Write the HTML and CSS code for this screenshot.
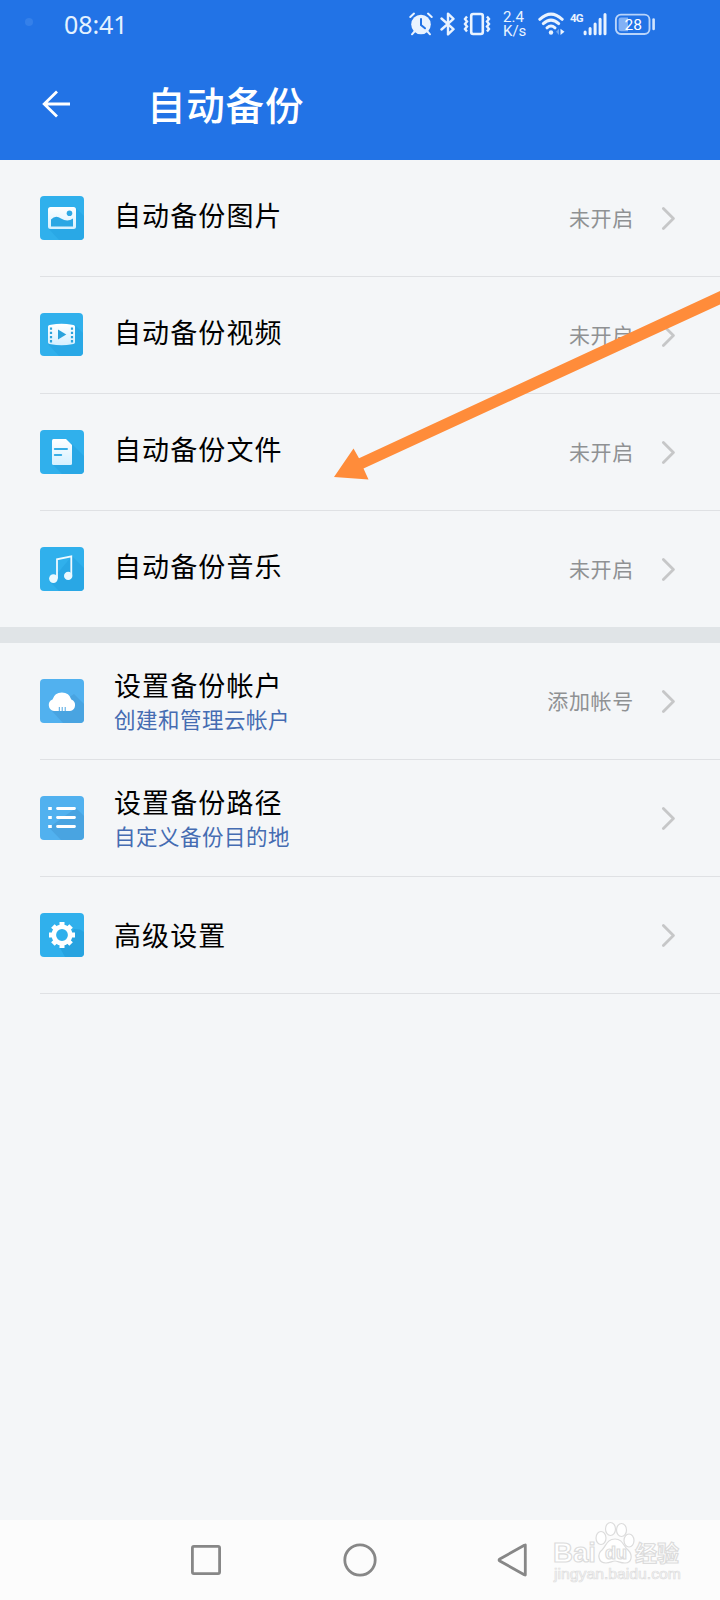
FILE: index.html
```html
<!DOCTYPE html>
<html lang="zh-CN">
<head>
  <meta charset="UTF-8" />
  <meta name="viewport" content="width=device-width, initial-scale=1" />
  <title>自动备份</title>
  <link rel="stylesheet" href="styles.css">
</head>
<body>
  <!-- shared gradient and chevron -->
  <svg class="defs" width="0" height="0">
    <defs>
      <linearGradient id="glyph" x1="0" y1="0" x2="0" y2="1">
        <stop offset="0" stop-color="#ffffff" />
        <stop offset="1" stop-color="#d5f0ff" />
      </linearGradient>
      <symbol id="chevron" viewBox="0 0 14 24">
        <path d="M2.4 2.4 L12.4 12.4 L2.4 22.4" fill="none" stroke="#c6c7c8" stroke-width="2.8" stroke-linecap="round" stroke-linejoin="round" />
      </symbol>
    </defs>
  </svg>

  <header>
    <div class="status-bar">
      <span class="camera-dot"></span>
      <span class="time">08:41</span>
      <div class="status-icons">
        <svg class="alarm" width="24" height="24" viewBox="0 0 24 24">
          <circle cx="12" cy="12.5" r="9.8" fill="#e9f3ff" />
          <path d="M1.3 5 L5 1.6 M22.7 5 L19 1.6 M5.5 19.5 L3 22.3 M18.5 19.5 L21 22.3" stroke="#e9f3ff" stroke-width="2" stroke-linecap="round" />
          <path d="M12 7 V13 L16 16.3" fill="none" stroke="#2273e6" stroke-width="2" stroke-linecap="round" />
        </svg>
        <svg class="bluetooth" width="16" height="24" viewBox="0 0 16 24">
          <path d="M1.5 6.5 L13.5 17.2 L8 22.4 V1.6 L13.5 6.8 L1.5 17.5" fill="none" stroke="#e9f3ff" stroke-width="2.4" stroke-linejoin="round" stroke-linecap="round" />
        </svg>
        <svg class="vibrate" width="28" height="24" viewBox="0 0 28 24">
          <rect x="8.2" y="2" width="11.6" height="20" rx="2" fill="none" stroke="#e9f3ff" stroke-width="2.6" />
          <path d="M4 4.5 L2 7 L4 9.5 L2 12 L4 14.5 L2 17 L4 19.5 M24 4.5 L26 7 L24 9.5 L26 12 L24 14.5 L26 17 L24 19.5" fill="none" stroke="#e9f3ff" stroke-width="2.4" />
        </svg>
        <div class="speed"><span>2.4</span><span>K/s</span></div>
        <svg class="wifi" width="28" height="24" viewBox="0 0 28 24">
          <g fill="none" stroke="#e9f3ff" stroke-width="3" stroke-linecap="round">
            <path d="M1.8 7.3 Q13 -3 24.2 7.3" />
            <path d="M5.3 11.6 Q13 4.6 20.7 11.6" />
            <path d="M9 15.8 Q13 12.3 17 15.8" />
          </g>
          <circle cx="13" cy="20.5" r="2.2" fill="#e9f3ff" />
          <path d="M22.5 16.8 L22.5 23 L26.500 19.8 Z" fill="#e9f3ff" />
          <path d="M21 16.8 L21 23 L18 19.8 Z" fill="#6da5f0" />
        </svg>
        <span class="network">4G</span>
        <svg class="signal" width="24" height="24" viewBox="0 0 24 24">
          <path d="M2.1 20 V21.8 M7.1 16.5 V21.8 M12.1 12 V21.8 M17.1 7.3 V21.8 M22 2.5 V21.8" stroke="#e9f3ff" stroke-width="3" stroke-linecap="round" />
        </svg>
        <svg class="battery" width="42" height="24" viewBox="0 0 42 24">
          <rect x="1.9" y="2.6" width="33.6" height="19.4" rx="5" fill="none" stroke="#b9d4fa" stroke-width="1.9" />
          <path d="M7 5.4 H14 V19.3 H7 Q4.6 19.3 4.6 17 V7.8 Q4.6 5.4 7 5.4 Z" fill="#82b1f5" />
          <path d="M39.6 7.5 V17" stroke="#d3e5fd" stroke-width="2.6" stroke-linecap="round" />
          <text x="19.2" y="17.6" text-anchor="middle">28</text>
        </svg>
      </div>
    </div>
    <div class="title-bar">
      <svg width="30" height="30" viewBox="0 0 30 30">
        <path d="M29 15 H3 M16 2.5 L3.2 15 L16 27.5" fill="none" stroke="#fff" stroke-width="2.8" />
      </svg>
      <h1>自动备份</h1>
    </div>
  </header>

  <main>
    <ul class="group">
      <li class="row">
        <svg class="icon" width="44" height="44" viewBox="0 0 44 44">
          <rect width="44" height="44" rx="4" fill="#30b0ec" />
          <path d="M8 32 L36 12 L44 20 V40 Q44 44 40 44 H19 Z" fill="#29a8e6" />
          <rect x="8" y="11" width="28" height="22" rx="2.5" fill="url(#glyph)" />
          <path d="M11 23.5 Q15.5 18.5 21 22.5 Q27.5 26.5 33 22.5 V30.5 H11 Z" fill="#2ba7e4" />
          <circle cx="29.5" cy="17.3" r="2.8" fill="#30a9e4" />
        </svg>
        <div class="label"><span class="name">自动备份图片</span></div>
        <span class="value">未开启</span>
        <svg class="chevron"><use href="#chevron" /></svg>
      </li>
      <li class="row">
        <svg class="icon" width="44" height="44" viewBox="0 0 44 44">
          <rect width="43" height="43" rx="4" fill="#30b0ec" />
          <path d="M8 31 L35 12 L43 20 V39 Q43 43 39 43 H19 Z" fill="#29a8e6" />
          <path d="M8 13.5 Q8 12 11 11.7 Q21.5 10 32 11.7 Q35 12 35 13.5 V29.5 Q35 31 32 31.3 Q21.5 33 11 31.3 Q8 31 8 29.5 Z" fill="url(#glyph)" />
          <path d="M11 14.5 V30 M32 14.5 V30" stroke="#2ba3dc" stroke-width="2.2" stroke-dasharray="2.3 1.9" />
          <path d="M18 16.5 V26.5 L26.3 21.5 Z" fill="#2ba3dc" />
        </svg>
        <div class="label"><span class="name">自动备份视频</span></div>
        <span class="value">未开启</span>
        <svg class="chevron"><use href="#chevron" /></svg>
      </li>
      <li class="row">
        <svg class="icon" width="44" height="44" viewBox="0 0 44 44">
          <rect width="44" height="44" rx="4" fill="#30b0ec" />
          <path d="M12 34 L31 13 L44 26 V40 Q44 44 40 44 H22 Z" fill="#29a7e5" />
          <path d="M13.5 9 H26 L32 15 V33.5 Q32 35 30.5 35 H13.5 Q12 35 12 33.5 V10.5 Q12 9 13.5 9 Z" fill="url(#glyph)" />
          <path d="M14.8 19.1 H27 M14.8 25 H21.2" stroke="#38aee6" stroke-width="2" stroke-linecap="round" />
        </svg>
        <div class="label"><span class="name">自动备份文件</span></div>
        <span class="value">未开启</span>
        <svg class="chevron"><use href="#chevron" /></svg>
      </li>
      <li class="row">
        <svg class="icon" width="44" height="44" viewBox="0 0 44 44">
          <rect width="44" height="44" rx="4" fill="#30b0ec" />
          <path d="M10 35 L32 9 L44 21 V40 Q44 44 40 44 H19 Z" fill="#29a7e5" />
          <path d="M17 31.5 V12.3 L31.3 9.3 V28.5" fill="none" stroke="#effaff" stroke-width="1.8" />
          <circle cx="13.4" cy="31.6" r="4.3" fill="#ebf9ff" />
          <circle cx="28.2" cy="28.9" r="4.2" fill="#ebf9ff" />
        </svg>
        <div class="label"><span class="name">自动备份音乐</span></div>
        <span class="value">未开启</span>
        <svg class="chevron"><use href="#chevron" /></svg>
      </li>
    </ul>

    <ul class="group">
      <li class="row">
        <svg class="icon" width="44" height="44" viewBox="0 0 44 44">
          <rect width="44" height="44" rx="4" fill="#51b1ef" />
          <path d="M11 31 L34 15 L44 25 V40 Q44 44 40 44 H23 Z" fill="#49a4e1" />
          <path d="M14 32 A6 6 0 0 1 12.5 20.5 A9.8 9.8 0 0 1 31.3 20.5 A6 6 0 0 1 30 32 Z" fill="#fff" />
          <path d="M19.3 28 V32 M22.2 28 V32 M25.2 28 V32" stroke="#4aa6e3" stroke-width="1" />
        </svg>
        <div class="label double"><span class="name">设置备份帐户</span><span class="desc">创建和管理云帐户</span></div>
        <span class="value">添加帐号</span>
        <svg class="chevron"><use href="#chevron" /></svg>
      </li>
      <li class="row">
        <svg class="icon" width="44" height="44" viewBox="0 0 44 44">
          <rect width="44" height="44" rx="4" fill="#51b1ef" />
          <path d="M9 31.5 L36 12 L44 20 V40 Q44 44 40 44 H21 Z" fill="#49a4e1" />
          <path d="M17.5 12.5 H34.5 M17.5 21.5 H34.5 M17.5 30.5 H34.5" stroke="#fff" stroke-width="2.8" stroke-linecap="round" />
          <path d="M8.2 12.5 H11.8 M8.2 21.5 H11.8 M8.2 30.5 H11.8" stroke="#fff" stroke-width="3.2" />
        </svg>
        <div class="label double"><span class="name">设置备份路径</span><span class="desc">自定义备份目的地</span></div>
        <svg class="chevron"><use href="#chevron" /></svg>
      </li>
      <li class="row">
        <svg class="icon" width="44" height="44" viewBox="0 0 44 44">
          <rect width="44" height="44" rx="4" fill="#30b0ec" />
          <path d="M20 35 L34 16 L40 16.5 L44 19 V40 Q44 44 40 44 H25 Z" fill="#27a3e0" />
          <circle cx="22" cy="22" r="8.2" fill="none" stroke="#fff" stroke-width="4.6" />
          <path d="M22 9 V13 M22 31 V35 M9 22 H13 M31 22 H35 M12.9 12.9 L15.5 15.5 M31.1 12.9 L28.5 15.5 M12.9 31.1 L15.5 28.5 M31.1 31.1 L28.5 28.5" stroke="#fff" stroke-width="5" />
        </svg>
        <div class="label"><span class="name solo">高级设置</span></div>
        <svg class="chevron"><use href="#chevron" /></svg>
      </li>
    </ul>
  </main>

  <nav>
    <svg width="34" height="34" viewBox="0 0 34 34">
      <rect x="3.4" y="3.4" width="27.2" height="27.2" rx="1.5" />
    </svg>
    <svg width="34" height="34" viewBox="0 0 34 34">
      <circle cx="17" cy="17" r="15.2" />
    </svg>
    <svg width="34" height="34" viewBox="0 0 34 34">
      <path d="M28.3 2 V32 Q28 32 27.3 31.7 L2.8 18 Q1.300 17 2.8 16 L27.3 2.3 Z" />
    </svg>
  </nav>

  <!-- arrow pointing at the file backup row -->
  <svg class="arrow" width="390" height="194" viewBox="0 0 390 194">
    <path d="M4 187 L23.5 158.5 L29 168.2 L390 1 V14.5 L33.5 178.5 L38.5 189.5 Z" fill="#ff8c3a" />
  </svg>

  <svg class="watermark" width="140" height="70" viewBox="0 0 140 70">
    <g fill="#fff" stroke="#dcdcdc" stroke-width="1.2">
      <text class="wm-brand" x="3" y="42" textLength="43" lengthAdjust="spacingAndGlyphs">Bai</text>
      <path d="M65 19 C57 19 56 26 52 30 C47 34 48 43 56 43 C60 43 62 41 65 41 C68 41 70 43 75 43 C82 43 83 35 78 30 C73 26 73 19 65 19 Z" />
      <ellipse cx="51" cy="18" rx="5" ry="6.5" />
      <ellipse cx="60.5" cy="9" rx="5" ry="6.5" />
      <ellipse cx="71.5" cy="10" rx="5" ry="6.5" />
      <ellipse cx="79" cy="20.5" rx="5" ry="6.5" />
      <text class="wm-du" x="55" y="39">du</text>
      <text class="wm-cn" x="85" y="40.5">经验</text>
    </g>
    <text class="wm-url" x="4" y="58.5" textLength="127" lengthAdjust="spacingAndGlyphs">jingyan.baidu.com</text>
  </svg>
</body>
</html>
```
FILE: styles.css
```css
* {
  box-sizing: border-box;
}
body {
  position: relative;
  display: flex;
  flex-direction: column;
  width: 720px;
  height: 1600px;
  margin: 0;
  overflow: hidden;
  background: #f4f6f8;
  color: #000;
  font-family: "Noto Sans CJK SC", sans-serif;
}
svg {
  display: block;
  flex: none;
}
.defs {
  position: absolute;
}
header {
  height: 160px;
  background: #2273e6;
  color: #fff;
}
/* Status bar */
.status-bar {
  display: flex;
  align-items: center;
  height: 48px;
  padding: 0 64px 0 25px;
}
.camera-dot {
  width: 8px;
  height: 8px;
  margin: 0 31px 4px 0;
  border-radius: 50%;
  background: #3580e9;
}
.time {
  color: #e4f2ff;
  font: 25px/46px "Noto Sans", sans-serif;
  letter-spacing: -0.1px;
}
.status-icons {
  display: flex;
  align-items: center;
  margin-left: auto;
}
.bluetooth {
  margin-left: 7px;
}
.vibrate {
  margin-left: 7px;
}
.speed {
  display: flex;
  flex-direction: column;
  width: 24px;
  margin: 0 11px 0 12px;
  color: #e9f3ff;
  font: 15px/14px Roboto, sans-serif;
}
.network {
  width: 13px;
  margin: 0 0 12px 4px;
  color: #e9f3ff;
  font: 700 11.5px/12px Roboto, sans-serif;
  letter-spacing: -0.8px;
}
.battery {
  margin-left: 7px;
}
.battery text {
  fill: #fff;
  font: 15.5px Roboto, sans-serif;
}
/* Title bar */
.title-bar {
  display: flex;
  align-items: center;
  height: 112px;
  padding: 0 0 0 41px;
}
.title-bar h1 {
  margin: 0 0 2px 76px;
  font-size: 38.5px;
  font-weight: 500;
  line-height: 60px;
  letter-spacing: 0.8px;
}
/* Setting rows */
main {
  flex: 1;
}
.group {
  margin: 0;
  padding: 0;
  list-style: none;
}
.group + .group {
  border-top: 16px solid #e0e4e7;
}
.row {
  display: flex;
  align-items: center;
  height: 117px;
  margin-left: 40px;
  padding-right: 45px;
  border-bottom: 1px solid #dfe1e4;
}
.group:first-child .row:last-child {
  height: 116px;
  border-bottom: 0;
}
.label {
  display: flex;
  flex: 1;
  flex-direction: column;
  margin-left: 30px;
  padding-bottom: 6px;
}
.label.double {
  padding-bottom: 0;
}
.name {
  font-size: 27px;
  line-height: 36px;
  letter-spacing: 1.1px;
}
.name.solo {
  padding-top: 5px;
}
.desc {
  color: #456cb2;
  font-size: 21.5px;
  line-height: 32px;
  letter-spacing: 0.5px;
}
.value {
  margin-right: 27px;
  padding-bottom: 2px;
  color: #8f9193;
  font-size: 21px;
  letter-spacing: 0.7px;
}
.chevron {
  width: 14px;
  height: 24px;
}
/* Navigation bar */
nav {
  display: flex;
  align-items: center;
  justify-content: center;
  gap: 120px;
  height: 80px;
  background: #fcfcfc;
}
nav svg {
  fill: none;
  stroke: #878787;
  stroke-width: 2.8;
  stroke-linejoin: round;
}
/* Overlays */
.arrow {
  position: absolute;
  top: 290px;
  left: 330px;
}
.watermark {
  position: absolute;
  top: 1520px;
  left: 550px;
}
.wm-brand {
  font: 700 28px "Liberation Sans", sans-serif;
}
.wm-du {
  font: 700 18px "Liberation Sans", sans-serif;
}
.wm-cn {
  font: 700 22px "Noto Sans CJK SC", sans-serif;
}
.wm-url {
  fill: #fff;
  stroke: #dedede;
  stroke-width: 0.7;
  font: 14px "Liberation Sans", sans-serif;
}
```
